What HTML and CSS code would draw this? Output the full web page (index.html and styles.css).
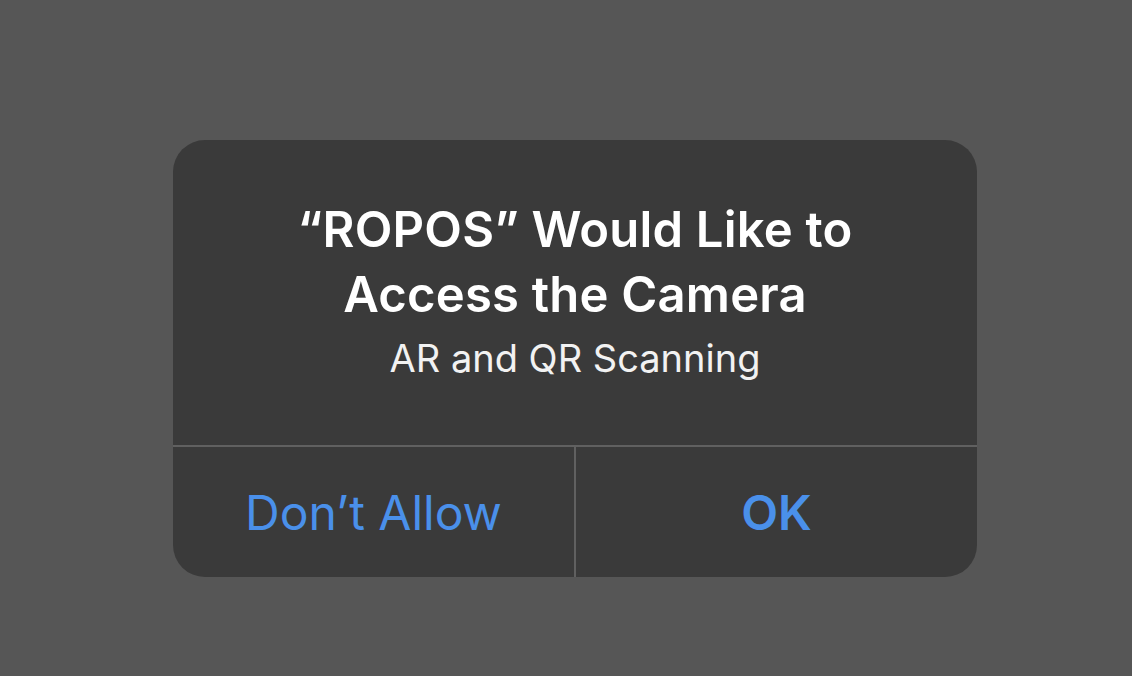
FILE: index.html
```html
<!DOCTYPE html>
<html lang="en">
<head>
    <meta charset="UTF-8">
    <meta name="viewport" content="width=device-width, initial-scale=1.0">
    <title>Camera Permission</title>
    <link rel="stylesheet" href="styles.css">
</head>
<body>
    <!-- Permission alert -->
    <div class="alert">
        <div class="alert-body">
            <div class="alert-title">“ROPOS” Would Like to<br>Access the Camera</div>
            <div class="alert-message">AR and QR Scanning</div>
        </div>
        <div class="alert-actions">
            <button class="alert-button">Don’t Allow</button>
            <button class="alert-button primary">OK</button>
        </div>
    </div>
</body>
</html>
```

FILE: styles.css
```css
body {
    margin: 0;
    height: 676px;
    padding: 140px 0 0 173px;
    box-sizing: border-box;
    background-color: #565656;
    font-family: Inter, "Noto Sans", sans-serif;
    overflow: hidden;
}

.alert {
    width: 804px;
    height: 437px;
    background-color: #3a3a3a;
    border-radius: 32px;
    overflow: hidden;
    display: flex;
    flex-direction: column;
}

.alert-body {
    padding: 57px 20px 0;
    height: 305px;
    box-sizing: border-box;
    text-align: center;
    color: #ffffff;
}

.alert-title {
    font-size: 49px;
    line-height: 65px;
    font-weight: 600;
    letter-spacing: 0.2px;
}

.alert-message {
    margin-top: 9px;
    font-size: 38px;
    line-height: 44px;
    color: #f2f2f2;
}

.alert-actions {
    flex: 1;
    display: flex;
    border-top: 2px solid #606060;
}

.alert-button {
    flex: 1;
    background: none;
    border: none;
    padding: 0;
    font-family: inherit;
    font-size: 48px;
    color: #4a90ea;
}

.alert-button + .alert-button {
    border-left: 2px solid #606060;
}

.alert-button.primary {
    font-weight: 600;
}
```
